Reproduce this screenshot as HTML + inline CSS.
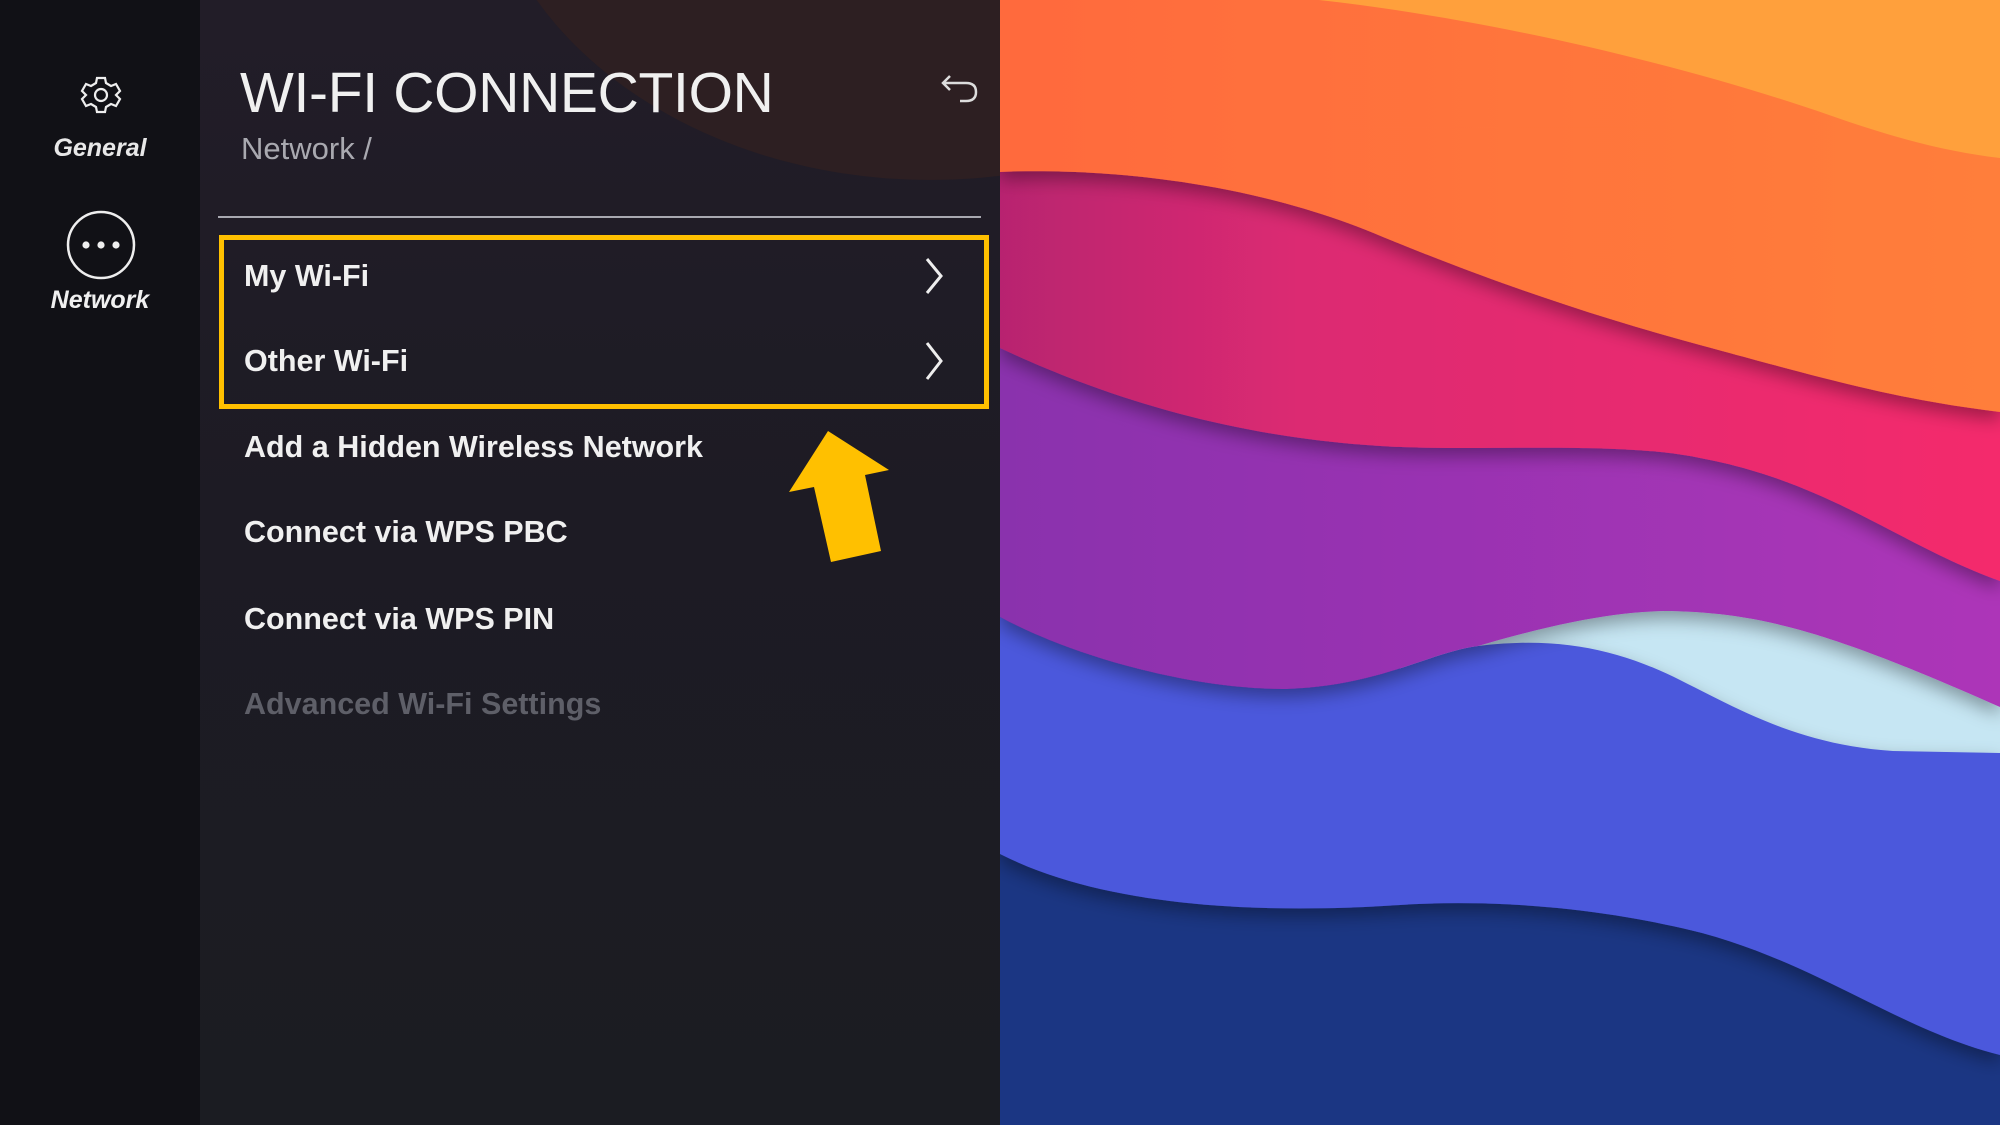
<!DOCTYPE html>
<html><head><meta charset="utf-8"><style>
html,body{margin:0;padding:0;width:2000px;height:1125px;overflow:hidden;background:#1b1b22;font-family:"Liberation Sans",sans-serif}
#root{position:relative;width:2000px;height:1125px;overflow:hidden}
.side{position:absolute;left:0;top:0;width:200px;height:1125px;background:#111116}
.main{position:absolute;left:200px;top:0;width:800px;height:1125px;background:linear-gradient(180deg,#221d28 0%,#1d1b24 45%,#1b1c22 100%);overflow:hidden}
.glow{position:absolute;left:280px;top:-520px;width:900px;height:700px;border-radius:50%;background:#2d1f22}
.t{position:absolute;color:#f2f2f2;white-space:nowrap}
.item{position:absolute;left:244px;font-size:30.5px;font-weight:bold;color:#f0f0f0;letter-spacing:0;white-space:nowrap}
</style></head><body><div id="root">
<div class="side"></div>
<div class="main"><div class="glow"></div></div>
<svg style="position:absolute;left:0;top:0" width="200" height="330">
<g transform="translate(101,95)" fill="none" stroke="#eee" stroke-width="2.2">
<path d="M-4,-17 L4,-17 L5,-12 L10,-9 L15,-11 L19,-4 L15,0 L19,4 L15,11 L10,9 L5,12 L4,17 L-4,17 L-5,12 L-10,9 L-15,11 L-19,4 L-15,0 L-19,-4 L-15,-11 L-10,-9 L-5,-12 Z"/>
<circle r="6"/></g>
<circle cx="101" cy="245" r="33" fill="none" stroke="#eee" stroke-width="2.5"/>
<circle cx="86" cy="245" r="3.6" fill="#eee"/><circle cx="101" cy="245" r="3.6" fill="#eee"/><circle cx="116" cy="245" r="3.6" fill="#eee"/>
</svg>
<div class="t" style="left:0;width:200px;text-align:center;top:134px;font-size:25px;font-style:italic;font-weight:bold;color:#e8e8e8">General</div>
<div class="t" style="left:0;width:200px;text-align:center;top:286px;font-size:25px;font-style:italic;font-weight:bold;color:#f0f0f0">Network</div>

<div class="t" style="left:240px;top:60px;font-size:57px;letter-spacing:-0.3px;color:#f0f0f0">WI-FI CONNECTION</div>
<div class="t" style="left:241px;top:131px;font-size:31px;color:#a9a9b0">Network /</div>
<svg style="position:absolute;left:940px;top:70px" width="44" height="36"><path d="M10,6 L3,13 L10,20 M3,13 L26,13 Q36,13 36,22 Q36,31 26,31 L20,31" fill="none" stroke="#ddd" stroke-width="2.5"/></svg>
<div style="position:absolute;left:218px;top:216px;width:763px;height:2px;background:#a8a8b0"></div>
<div style="position:absolute;left:219px;top:235px;width:760px;height:164px;border:5px solid #ffc000"></div>
<div class="item" style="top:259px">My Wi-Fi</div>
<div class="item" style="top:344px">Other Wi-Fi</div>
<svg style="position:absolute;left:920px;top:255px" width="30" height="135" fill="none" stroke="#eee" stroke-width="3"><path d="M7,4 L21,21 L7,38"/><path d="M7,88 L21,106 L7,124"/></svg>
<div class="item" style="top:430px">Add a Hidden Wireless Network</div>
<div class="item" style="top:515px">Connect via WPS PBC</div>
<div class="item" style="top:602px">Connect via WPS PIN</div>
<div class="item" style="top:687px;color:#5e5f68">Advanced Wi-Fi Settings</div>
<svg style="position:absolute;left:0;top:0" width="1000" height="600"><polygon points="828,431 889,470 865,475 881,551 831,562 814,487 789,492" fill="#ffc000"/></svg>

<svg style="position:absolute;left:1000px;top:0" width="1000" height="1125" viewBox="1000 0 1000 1125">
<defs>
<linearGradient id="o" x1="0" x2="1"><stop offset="0" stop-color="#ff6a3d"/><stop offset="1" stop-color="#ff7e3a"/></linearGradient>
<linearGradient id="p" x1="0" x2="1"><stop offset="0" stop-color="#b8246f"/><stop offset="0.3" stop-color="#dc2a72"/><stop offset="1" stop-color="#f42a6c"/></linearGradient>
<linearGradient id="v" x1="0" x2="1"><stop offset="0" stop-color="#8a30ad"/><stop offset="1" stop-color="#ad36b8"/></linearGradient>
<filter id="s" x="-10%" y="-10%" width="120%" height="130%"><feDropShadow dx="0" dy="8" stdDeviation="9" flood-opacity="0.35"/></filter>
</defs>
<rect x="1000" y="0" width="1000" height="1125" fill="#1b3683"/>
<rect x="1400" y="560" width="600" height="260" fill="#c6e6f3"/>
<path filter="url(#s)" d="M1000,617 C1080,660 1200,690 1287,689 C1380,686 1430,652 1478,646 C1560,636 1620,650 1680,680 C1740,710 1800,745 1893,751 L2000,753 L2000,1055 C1900,1030 1820,965 1702,933 C1620,912 1510,898 1400,905 C1250,915 1100,905 1000,854 Z" fill="#4c58dc"/>
<path filter="url(#s)" d="M1000,0 L1000,617 C1080,660 1200,690 1287,689 C1380,686 1430,652 1478,646 C1560,622 1620,611 1670,611 C1760,613 1829,631 2000,707 L2000,0Z" fill="url(#v)"/>
<path filter="url(#s)" d="M1000,0 L1000,348 C1100,395 1250,448 1446,448 C1550,448 1638,445 1700,458 C1829,482 1900,545 2000,581 L2000,0Z" fill="url(#p)"/>
<path filter="url(#s)" d="M1000,0 L1000,172 C1100,168 1250,180 1383,237 C1500,285 1600,318 1700,345 C1829,380 1900,400 2000,412 L2000,0Z" fill="url(#o)"/>
<path d="M1319,0 C1500,20 1700,70 1829,115 C1900,140 1950,152 2000,158 L2000,0Z" fill="#ffa03c"/>
</svg>
</div></body></html>
